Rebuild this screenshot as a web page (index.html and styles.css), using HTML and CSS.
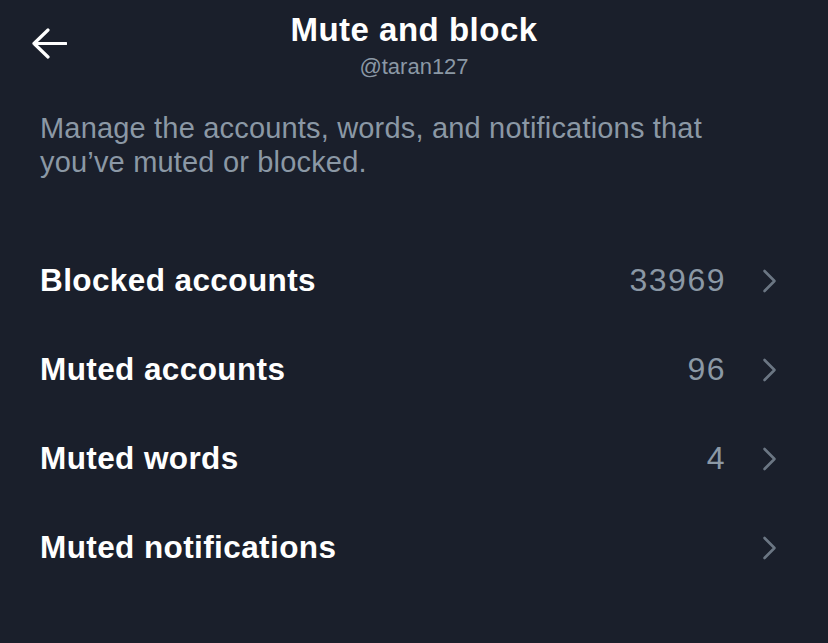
FILE: index.html
```html
<!DOCTYPE html>
<html lang="en">
<head>
<meta charset="utf-8">
<title>Mute and block</title>
<link rel="stylesheet" href="styles.css">
</head>
<body>
<div class="page">
  <header class="header">
    <div class="back">
      <svg width="36" height="32" viewBox="0 0 36 32" aria-hidden="true">
        <path d="M17 2 L3 15.5 L17 29 M3 15.5 H35" fill="none" stroke="#ffffff" stroke-width="3.2" stroke-linecap="round" stroke-linejoin="round"/>
      </svg>
    </div>
    <div class="titles">
      <h1 class="title">Mute and block</h1>
      <div class="handle">@taran127</div>
    </div>
    <div class="spacer"></div>
  </header>

  <p class="desc">Manage the accounts, words, and notifications that you’ve muted or blocked.</p>

  <ul class="list">
    <li class="row">
      <span class="label">Blocked accounts</span>
      <span class="count">33969</span>
      <svg class="chev" width="15" height="24" viewBox="0 0 15 24" aria-hidden="true"><polyline points="2.5,2 12.5,12 2.5,22" fill="none" stroke="#6b7683" stroke-width="2.6" stroke-linecap="round" stroke-linejoin="round"/></svg>
    </li>
    <li class="row">
      <span class="label">Muted accounts</span>
      <span class="count">96</span>
      <svg class="chev" width="15" height="24" viewBox="0 0 15 24" aria-hidden="true"><polyline points="2.5,2 12.5,12 2.5,22" fill="none" stroke="#6b7683" stroke-width="2.6" stroke-linecap="round" stroke-linejoin="round"/></svg>
    </li>
    <li class="row">
      <span class="label">Muted words</span>
      <span class="count">4</span>
      <svg class="chev" width="15" height="24" viewBox="0 0 15 24" aria-hidden="true"><polyline points="2.5,2 12.5,12 2.5,22" fill="none" stroke="#6b7683" stroke-width="2.6" stroke-linecap="round" stroke-linejoin="round"/></svg>
    </li>
    <li class="row">
      <span class="label">Muted notifications</span>
      <span class="count"></span>
      <svg class="chev" width="15" height="24" viewBox="0 0 15 24" aria-hidden="true"><polyline points="2.5,2 12.5,12 2.5,22" fill="none" stroke="#6b7683" stroke-width="2.6" stroke-linecap="round" stroke-linejoin="round"/></svg>
    </li>
  </ul>
</div>
</body>
</html>
```

FILE: styles.css
```css
html, body {
  margin: 0;
  padding: 0;
  background: #1a1f2b;
}

body {
  font-family: "Liberation Sans", Arial, sans-serif;
  color: #ffffff;
  width: 828px;
  height: 643px;
  overflow: hidden;
}

.page {
  display: flex;
  flex-direction: column;
}

.header {
  display: grid;
  grid-template-columns: 1fr auto 1fr;
  padding-top: 11px;
}

.back {
  padding-left: 31px;
  padding-top: 17px;
}

.back svg {
  display: block;
}

.titles {
  display: flex;
  flex-direction: column;
  align-items: center;
}

.title {
  margin: 0;
  font-size: 33px;
  line-height: 38px;
  font-weight: 700;
  letter-spacing: 0.5px;
}

.handle {
  margin-top: 4px;
  font-size: 22px;
  line-height: 28px;
  color: #8b98a5;
}

.desc {
  margin: 30px 0 0 0;
  padding: 0 110px 0 40px;
  font-size: 29px;
  line-height: 34px;
  letter-spacing: 0.18px;
  color: #8b98a5;
}

.list {
  list-style: none;
  margin: 57px 0 0 0;
  padding: 0;
}

.row {
  display: flex;
  align-items: center;
  height: 89px;
  padding: 0 51px 0 40px;
}

.label {
  flex: 1;
  font-size: 31.5px;
  font-weight: 700;
  letter-spacing: 0.4px;
}

.count {
  font-size: 32px;
  color: #8b98a5;
  margin-right: 36px;
  letter-spacing: 1.5px;
}

.chev {
  display: block;
  flex: none;
}
```
